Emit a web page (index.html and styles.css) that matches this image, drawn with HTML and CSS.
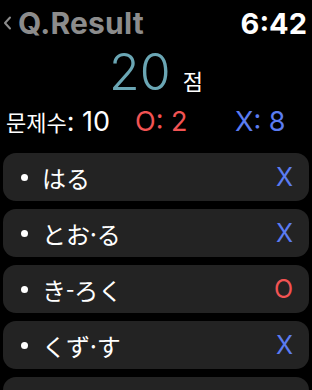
FILE: index.html
```html
<!DOCTYPE html>
<html lang="ko">

<head>
    <meta charset="UTF-8">
    <meta name="viewport" content="width=device-width, initial-scale=1.0">
    <title>Q.Result</title>
    <link rel="stylesheet" href="styles.css">
</head>

<body>
    <div class="screen">
        <div class="topbar">
            <div class="back">
                <svg class="chev" width="9" height="14" viewBox="0 0 9 14">
                    <path d="M7 1.5 L2 7 L7 12.5" fill="none" stroke="#8c8c8c" stroke-width="2" stroke-linecap="round" stroke-linejoin="round" />
                </svg>
                <span>Q.Result</span>
            </div>
            <div class="time">6:42</div>
        </div>

        <div class="score">
            <span class="points">20</span>
            <span class="unit">점</span>
        </div>

        <div class="summary">
            <span class="total"><span class="ko">문제수</span>: 10</span>
            <span class="right">O: 2</span>
            <span class="wrong">X: 8</span>
        </div>

        <div class="list">
            <div class="item">
                <span class="dot"></span>
                <span class="word">はる</span>
                <span class="mark wrong">X</span>
            </div>
            <div class="item">
                <span class="dot"></span>
                <span class="word">とお·る</span>
                <span class="mark wrong">X</span>
            </div>
            <div class="item">
                <span class="dot"></span>
                <span class="word">き-ろく</span>
                <span class="mark right">O</span>
            </div>
            <div class="item">
                <span class="dot"></span>
                <span class="word">くず·す</span>
                <span class="mark wrong">X</span>
            </div>
            <div class="item">
                <span class="dot"></span>
                <span class="word">なが·れる</span>
                <span class="mark wrong">X</span>
            </div>
        </div>
    </div>
</body>

</html>
```

FILE: styles.css
```css
body {
    margin: 0;
    background-color: #000;
    font-family: "Inter", "Noto Sans CJK KR", sans-serif;
    color: #fff;
}

.screen {
    width: 312px;
    height: 390px;
    overflow: hidden;
}

.topbar {
    display: flex;
    justify-content: space-between;
    align-items: center;
    height: 46px;
    padding: 0 5px 0 3px;
}

.back {
    display: flex;
    align-items: center;
    gap: 6px;
    color: #8c8c8c;
    font-size: 30px;
    font-weight: 700;
    letter-spacing: 0.2px;
}

.time {
    font-size: 29px;
    font-weight: 700;
}

.score {
    display: flex;
    justify-content: center;
    align-items: baseline;
    gap: 12px;
    height: 58px;
    margin-top: -4px;
}

.points {
    color: #6aa6b4;
    font-size: 50px;
    font-weight: 300;
}

.unit {
    font-size: 22px;
}

.summary {
    display: flex;
    align-items: center;
    height: 42px;
    padding: 0 6px;
    font-size: 27px;
}

.summary .ko {
    font-size: 22px;
}

.summary .total {
    width: 129px;
}

.summary .right {
    width: 100px;
}

.right {
    color: #f25353;
}

.wrong {
    color: #5b7cf2;
}

.list {
    display: flex;
    flex-direction: column;
    gap: 8px;
    padding: 11px 3px 0;
}

.item {
    display: flex;
    align-items: center;
    height: 48px;
    flex-shrink: 0;
    padding: 0 16px 0 18px;
    background-color: #232323;
    border-radius: 13px;
}

.dot {
    width: 7px;
    height: 7px;
    border-radius: 50%;
    background-color: #fff;
    margin-right: 14px;
}

.word {
    flex: 1;
    font-family: "Noto Sans CJK JP", sans-serif;
    font-size: 24px;
}

.mark {
    font-size: 25px;
}
```
